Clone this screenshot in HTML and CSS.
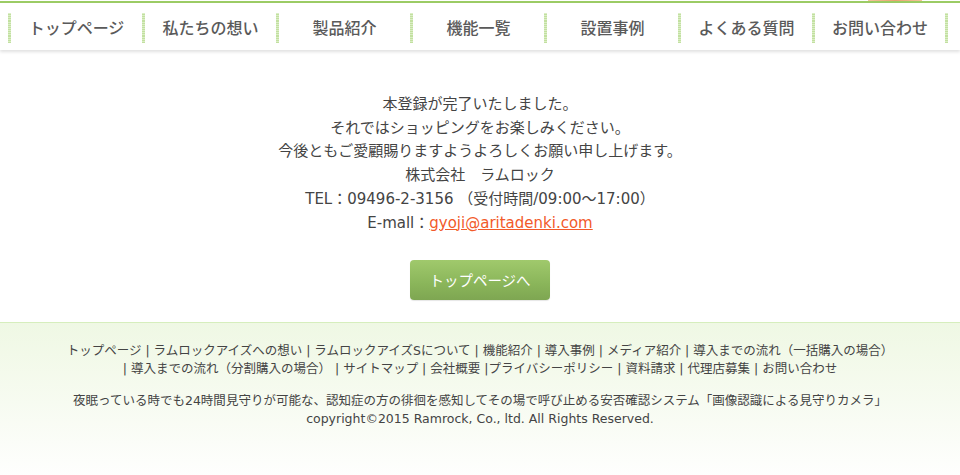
FILE: index.html
```html
<!DOCTYPE html>
<html lang="ja">
<head>
<meta charset="utf-8">
<title>登録完了</title>
<link rel="stylesheet" href="styles.css">
</head>
<body>
<header class="header">
  <div class="topline"><span class="topimg"></span></div>
  <nav class="gnav">
    <ul class="gnav-list">
      <li class="gnav-item">トップページ</li>
      <li class="gnav-item">私たちの想い</li>
      <li class="gnav-item">製品紹介</li>
      <li class="gnav-item">機能一覧</li>
      <li class="gnav-item">設置事例</li>
      <li class="gnav-item">よくある質問</li>
      <li class="gnav-item gnav-last">お問い合わせ</li>
    </ul>
  </nav>
</header>
<main class="main">
  <p class="msg">本登録が完了いたしました。<br>それではショッピングをお楽しみください。<br>今後ともご愛顧賜りますようよろしくお願い申し上げます。<br>株式会社　ラムロック<br>TEL：09496-2-3156 （受付時間/09:00～17:00）<br>E-mall：<a class="mail" href="#">gyoji@aritadenki.com</a></p>
  <a class="btn" href="#">トップページへ</a>
</main>
<footer class="footer">
  <p class="flinks">トップページ | ラムロックアイズへの想い | ラムロックアイズSについて | 機能紹介 | 導入事例 | メディア紹介 | 導入までの流れ（一括購入の場合）<br>| 導入までの流れ（分割購入の場合） | サイトマップ | 会社概要 |プライバシーポリシー | 資料請求 | 代理店募集 | お問い合わせ</p>
  <p class="fdesc">夜眠っている時でも24時間見守りが可能な、認知症の方の徘徊を感知してその場で呼び止める安否確認システム「画像認識による見守りカメラ」<br>copyright©2015 Ramrock, Co., ltd. All Rights Reserved.</p>
</footer>
</body>
</html>
```

FILE: styles.css
```css
html, body {
  margin: 0;
  padding: 0;
  background: #fff;
}
body {
  font-family: "DejaVu Sans", "Noto Sans CJK JP", sans-serif;
  color: #444;
  width: 960px;
  height: 475px;
  overflow: hidden;
}
.header {
  position: relative;
}
.topline {
  height: 1px;
  border-bottom: 2px solid #9ccc65;
  position: relative;
}
.topimg {
  position: absolute;
  left: 868px;
  top: 0;
  width: 54px;
  height: 1px;
  background: linear-gradient(90deg, #f3c49a, #e9a26f, #f3c49a);
}
.gnav {
  height: 47px;
  background: #fff;
  box-shadow: 0 2px 3px rgba(0,0,0,0.12);
  position: relative;
  z-index: 1;
}
.gnav-list {
  list-style: none;
  margin: 0;
  padding: 10px 0 0 8px;
  display: flex;
}
.gnav-item {
  width: 131px;
  height: 30px;
  line-height: 29px;
  text-align: center;
  font-family: "Noto Sans CJK JP", sans-serif;
  font-weight: 500;
  font-size: 16px;
  color: #5a5a5a;
  border-left: 3px solid transparent;
  border-image: repeating-linear-gradient(180deg, #c2e0a0 0 1px, #dbeec6 1px 2px) 1;
}
.gnav-last {
  border-right: 3px solid transparent;
  width: 130px;
}
.main {
  display: flex;
  flex-direction: column;
  align-items: center;
  padding-top: 43px;
  height: 226px;
  box-sizing: border-box;
  margin-top: 0;
}
.msg {
  margin: 0;
  text-align: center;
  font-size: 15px;
  line-height: 23.7px;
  color: #444;
  font-family: "DejaVu Sans", "Noto Sans CJK JP", sans-serif;
}
.mail {
  color: #f25a2a;
  text-decoration: underline;
}
.btn {
  display: block;
  margin-top: 25px;
  width: 140px;
  height: 41px;
  line-height: 40px;
  text-align: center;
  border-radius: 4px;
  background: linear-gradient(180deg, #a0c96c 0%, #8ab55a 60%, #7ea652 100%);
  color: #fff;
  font-family: "Noto Sans CJK JP", sans-serif;
  font-size: 14.5px;
  text-decoration: none;
  box-shadow: 0 1px 1px rgba(0,0,0,0.1);
}
.footer {
  margin-top: 46px;
  border-top: 1px solid #d6eebd;
  background: linear-gradient(180deg, #eff8e4 0%, #f7fbf1 50%, #ffffff 100%);
  height: 160px;
  text-align: center;
  font-family: "DejaVu Sans", "Noto Sans CJK JP", sans-serif;
  color: #444;
}
.flinks {
  margin: 0;
  padding-top: 19px;
  font-size: 12.5px;
  line-height: 18px;
}
.fdesc {
  margin: 14px 0 0;
  font-size: 12.5px;
  line-height: 18px;
}
```
